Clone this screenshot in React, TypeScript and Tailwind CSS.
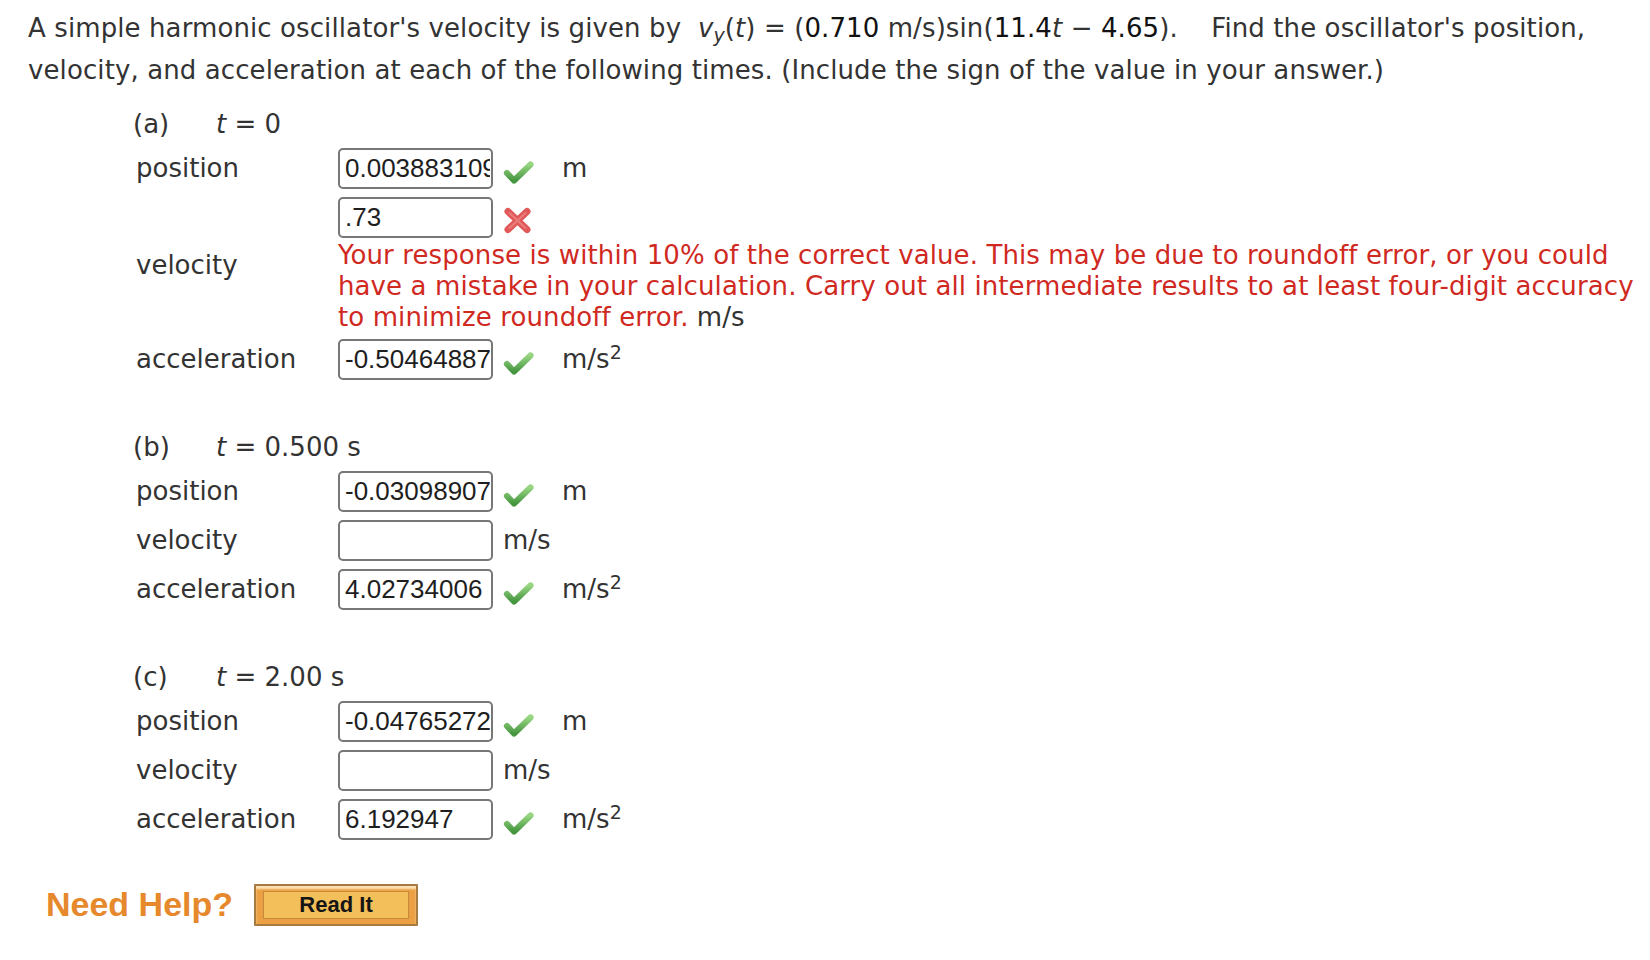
import React from 'react';

type Status = 'ok' | 'bad' | null;

const Check = () => (
  <svg width="31" height="25" viewBox="0 0 31 25" className="mt-[8px] shrink-0">
    <defs>
      <linearGradient id="chk" x1="0" y1="0" x2="0" y2="1">
        <stop offset="0" stopColor="#98d683" />
        <stop offset="1" stopColor="#469640" />
      </linearGradient>
    </defs>
    <path
      d="M4 13 L11 20.5 L27.5 4.5"
      fill="none"
      stroke="url(#chk)"
      strokeWidth="6.2"
      strokeLinecap="round"
      strokeLinejoin="round"
    />
  </svg>
);

const Cross = () => (
  <svg width="29" height="27" viewBox="0 0 29 27" className="mt-[6px] shrink-0">
    <path d="M5 4.5 L24 22.5 M24 4.5 L5 22.5" stroke="#e05858" strokeWidth="7" strokeLinecap="round" />
    <path d="M6.5 6 L22.5 21 M22.5 6 L6.5 21" stroke="#f4a0a0" strokeWidth="2" strokeLinecap="round" opacity="0.5" />
  </svg>
);

const Answer = ({ value }: { value: string }) => (
  <input
    readOnly
    value={value}
    className="h-[41px] w-[155px] shrink-0 rounded-[5px] border-2 border-[#777] bg-white pl-[5px] pr-[1px] font-['Liberation_Sans',Arial,sans-serif] text-[26px] text-[#1e1e1e] outline-none"
  />
);

const M2 = () => (
  <span>
    m/s<sup className="text-[19px]">2</sup>
  </span>
);

interface RowProps {
  label: string;
  value: string;
  status: Status;
  unit: React.ReactNode;
  className?: string;
}

const Row: React.FC<RowProps> = ({ label, value, status, unit, className }) => (
  <div className={`flex h-[41px] items-center ${className ?? ''}`}>
    <div className="w-[202px] shrink-0">{label}</div>
    <Answer value={value} />
    {status === 'ok' ? (
      <>
        <span className="ml-[10px]">
          <Check />
        </span>
        <span className="ml-[28px]">{unit}</span>
      </>
    ) : (
      <span className="ml-[10px]">{unit}</span>
    )}
  </div>
);

const PartHeader = ({ part, time }: { part: string; time: string }) => (
  <div className="flex h-[30px] items-center leading-[30px] pl-[1px]">
    <span className="w-[83px]">({part})</span>
    <span>
      <i>t</i> = {time}
    </span>
  </div>
);

const parts = [
  {
    part: 'b',
    time: '0.500 s',
    rows: [
      { label: 'position', value: '-0.030989072', status: 'ok' as Status, unit: 'm' },
      { label: 'velocity', value: '', status: null, unit: 'm/s' },
      { label: 'acceleration', value: '4.02734006', status: 'ok' as Status, unit: <M2 /> },
    ],
  },
  {
    part: 'c',
    time: '2.00 s',
    rows: [
      { label: 'position', value: '-0.047652725', status: 'ok' as Status, unit: 'm' },
      { label: 'velocity', value: '', status: null, unit: 'm/s' },
      { label: 'acceleration', value: '6.192947', status: 'ok' as Status, unit: <M2 /> },
    ],
  },
];

export default function App() {
  return (
    <div className="min-h-screen bg-white pl-[28px] pr-[8px] pt-[7px] font-['DejaVu_Sans',Verdana,sans-serif] text-[26px] text-[#333]">
      <p className="leading-[42px] tracking-[0.1px]">
        A simple harmonic oscillator's velocity is given by&nbsp;{' '}
        <i>v</i>
        <sub className="text-[19px]">
          <i>y</i>
        </sub>
        (<i>t</i>) = (<span className="text-[#111]">0.710</span> m/s)sin(
        <span className="text-[#111]">11.4</span>
        <i>t</i> − <span className="text-[#111]">4.65</span>).&nbsp;&nbsp;&nbsp; Find the oscillator's position,
        velocity, and acceleration at each of the following times. (Include the sign of the value in your answer.)
      </p>

      <div className="ml-[104px] mt-[18px]">
        <PartHeader part="a" time="0" />
        <div className="mt-[9px] pl-[4px]">
          <Row label="position" value="0.003883109" status="ok" unit="m" />

          <div className="mt-[8px] flex items-center">
            <div className="w-[202px] shrink-0">velocity</div>
            <div className="flex flex-col">
              <div className="flex h-[41px] items-center">
                <Answer value=".73" />
                <span className="ml-[10px]">
                  <Cross />
                </span>
              </div>
              <p className="mt-[2px] leading-[31px]">
                <span className="tracking-[0.1px] text-[#d0291f]">
                  Your response is within 10% of the correct value. This may be due to roundoff error, or you could
                  have a mistake in your calculation. Carry out all intermediate results to at least four-digit
                  accuracy to minimize roundoff error.
                </span>{' '}
                m/s
              </p>
            </div>
          </div>

          <Row label="acceleration" value="-0.504648874" status="ok" unit={<M2 />} className="mt-[6px]" />
        </div>

        {parts.map((p) => (
          <div key={p.part} className="mt-[52px]">
            <PartHeader part={p.part} time={p.time} />
            <div className="mt-[9px] flex flex-col gap-[8px] pl-[4px]">
              {p.rows.map((r) => (
                <Row key={r.label} label={r.label} value={r.value} status={r.status} unit={r.unit} />
              ))}
            </div>
          </div>
        ))}
      </div>

      <div className="mt-[39px] flex items-center pl-[18px]">
        <span className="font-['Liberation_Sans',Arial,sans-serif] text-[34px] font-bold text-[#e6892d]">
          Need Help?
        </span>
        <div className="ml-[21px] rounded-[1px] border-2 border-[#a87a40] bg-[#eca044] px-[7px] pb-[5px] pt-[5px] shadow-[inset_0_3px_2px_rgba(255,236,200,0.85)]">
          <div className="flex h-[28px] w-[146px] items-center justify-center border border-[#c5883c] bg-[#f3bf5b] font-['Liberation_Sans',Arial,sans-serif] text-[22px] font-bold text-[#151515]">
            Read It
          </div>
        </div>
      </div>
    </div>
  );
}
